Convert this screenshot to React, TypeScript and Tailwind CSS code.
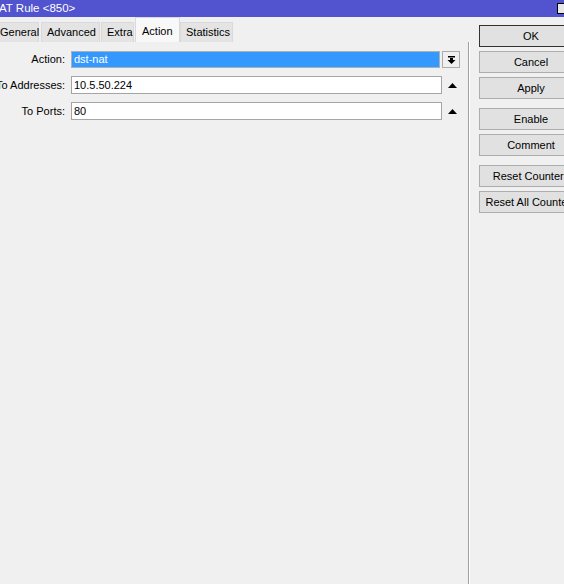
import React from "react";

function UpArrow() {
  return (
    <svg width="9" height="5" viewBox="0 0 9 5">
      <path d="M0 5 L4.5 0 L9 5 Z" fill="#000" />
    </svg>
  );
}

function DropButton() {
  return (
    <div className="flex h-[17px] w-[18px] items-center justify-center border border-[#acacac] bg-[#f0f0f0]">
      <svg width="9" height="8" viewBox="0 0 9 8">
        <rect x="1" y="0" width="7" height="1.5" fill="#000" />
        <path d="M3 2 H6 V4 H8.5 L4.5 8 L0.5 4 H3 Z" fill="#000" />
      </svg>
    </div>
  );
}

function Tab({ label, active, className }: { label: string; active?: boolean; className?: string }) {
  return (
    <div
      className={
        active
          ? "flex h-[25px] items-start border border-b-0 border-[#d9d9d9] bg-[#f8f8f8] px-[6px] pt-[5px] " + (className ?? "")
          : "mt-[5px] flex h-[20px] items-center border border-b-0 border-[#d9d9d9] bg-[#e4e4e4] px-[5px] " + (className ?? "")
      }
    >
      {label}
    </div>
  );
}

function SideButton({ label, primary }: { label: string; primary?: boolean }) {
  return (
    <div
      className={
        "flex h-[22px] w-[104px] shrink-0 items-center justify-center bg-[#e1e1e1] border " +
        (primary ? "border-[#333333]" : "border-[#adadad]")
      }
    >
      {label}
    </div>
  );
}

export default function App() {
  return (
    <div className="h-[584px] w-[564px] overflow-hidden bg-[#f0f0f0] font-['Liberation_Sans',Arial,sans-serif] text-[11px] text-black">
      <div className="flex h-[17px] items-center justify-between bg-[#5153cf] text-white">
        <span className="ml-[-1px] text-[11.5px]">AT Rule &lt;850&gt;</span>
        <div className="mr-[-3px] h-[11px] w-[10px] border border-black bg-[#e8e8e8]" />
      </div>
      <div className="flex">
        <div className="w-[468px] shrink-0">
          <div className="ml-[-6px] flex h-[25px] items-start">
            <Tab label="General" className="w-[45px]" />
            <Tab label="Advanced" className="ml-[2px] w-[59px]" />
            <Tab label="Extra" className="ml-[1px] w-[33px]" />
            <Tab label="Action" active className="ml-[1px] w-[45px]" />
            <Tab label="Statistics" className="w-[53px]" />
          </div>
          <div className="flex flex-col gap-[8px] pt-[9px]">
            <div className="flex h-[17px] items-center">
              <div className="w-[66px] pr-[1px] text-right">Action:</div>
              <div className="ml-[5px] flex h-[17px] w-[369px] items-center border border-[#aab0b8] bg-[#3399ff] px-[2px] text-white">
                dst-nat
              </div>
              <div className="ml-[2px]">
                <DropButton />
              </div>
            </div>
            <div className="flex h-[18px] items-center">
              <div className="w-[66px] pr-[1px] text-right whitespace-nowrap">
                <span className="ml-[-4px]">To Addresses:</span>
              </div>
              <div className="ml-[5px] flex h-[18px] w-[371px] items-center border border-[#a5a5a5] bg-white px-[2px]">
                10.5.50.224
              </div>
              <div className="ml-[5px] flex w-[10px] justify-center">
                <UpArrow />
              </div>
            </div>
            <div className="flex h-[18px] items-center">
              <div className="w-[66px] pr-[1px] text-right">To Ports:</div>
              <div className="ml-[5px] flex h-[18px] w-[371px] items-center border border-[#a5a5a5] bg-white px-[2px]">
                80
              </div>
              <div className="ml-[5px] flex w-[10px] justify-center">
                <UpArrow />
              </div>
            </div>
          </div>
        </div>
        <div className="mt-[25px] h-[560px] w-[2px] shrink-0 border-l border-[#a0a0a0] bg-white" />
        <div className="ml-[9px] flex flex-col pt-[8px]">
          <SideButton label="OK" primary />
          <div className="mt-[4px]">
            <SideButton label="Cancel" />
          </div>
          <div className="mt-[4px]">
            <SideButton label="Apply" />
          </div>
          <div className="mt-[9px]">
            <SideButton label="Enable" />
          </div>
          <div className="mt-[4px]">
            <SideButton label="Comment" />
          </div>
          <div className="mt-[9px]">
            <SideButton label="Reset Counters" />
          </div>
          <div className="mt-[4px]">
            <SideButton label="Reset All Counters" />
          </div>
        </div>
      </div>
    </div>
  );
}
